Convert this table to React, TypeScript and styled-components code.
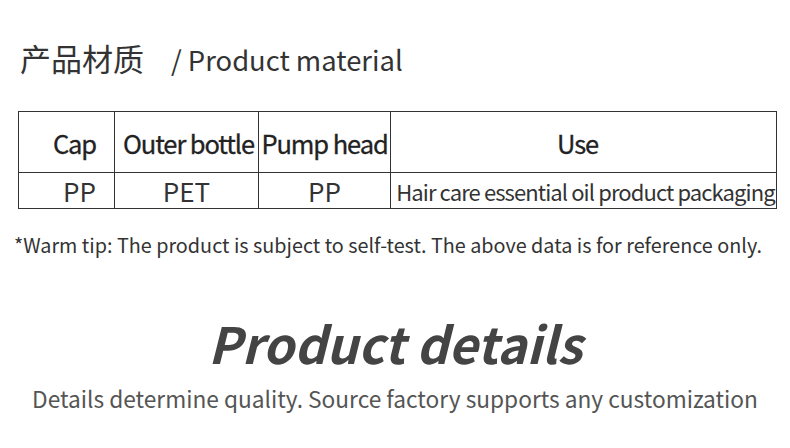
import React from "react";
import styled, { createGlobalStyle } from "styled-components";

const GlobalStyle = createGlobalStyle`
  html, body {
    margin: 0;
    padding: 0;
    background: #ffffff;
  }
  body {
    font-family: "Noto Sans CJK SC", "Noto Sans", sans-serif;
    color: #333333;
  }
`;

const Page = styled.div`
  width: 790px;
  height: 448px;
  overflow: hidden;
  display: flex;
  flex-direction: column;
`;

const Heading = styled.div`
  display: flex;
  align-items: baseline;
  gap: 27px;
  padding: 38px 0 0 20px;
  height: 71px;
  box-sizing: border-box;
`;

const HeadingCn = styled.span`
  font-size: 31px;
  line-height: 40px;
  color: #333;
`;

const HeadingEn = styled.span`
  font-size: 27.4px;
  line-height: 40px;
  color: #333;
`;

const Table = styled.table`
  margin: 40px 0 0 18px;
  width: 759px;
  border-collapse: collapse;
  table-layout: fixed;
`;

const Th = styled.th<{ $w?: number; $padL?: number; $padR?: number }>`
  width: ${(p) => (p.$w ? `${p.$w}px` : "auto")};
  height: 61px;
  padding: 0 ${(p) => p.$padR ?? 0}px 0 ${(p) => p.$padL ?? 0}px;
  border: 1px solid #333;
  font-size: 25.5px;
  font-weight: 400;
  -webkit-text-stroke: 0.3px #222;
  letter-spacing: -1.1px;
  color: #222;
  text-align: center;
  vertical-align: middle;
  white-space: nowrap;
  box-sizing: border-box;
`;

const Td = styled.td<{ $small?: boolean; $padL?: number }>`
  height: 36px;
  padding: 0 0 0 ${(p) => p.$padL ?? 0}px;
  border: 1px solid #333;
  font-size: ${(p) => (p.$small ? "22px" : "26px")};
  letter-spacing: ${(p) => (p.$small ? "-0.9px" : "0")};
  line-height: 34px;
  color: #333;
  text-align: center;
  white-space: nowrap;
  box-sizing: border-box;
`;

const Tip = styled.p`
  margin: 22px 0 0 14px;
  font-size: 19.8px;
  line-height: 28px;
  color: #333;
`;

const Details = styled.section`
  display: flex;
  flex-direction: column;
  align-items: center;
  margin-top: 53px;
`;

const DetailsTitle = styled.h2`
  margin: 0;
  font-size: 50px;
  line-height: 60px;
  font-weight: 700;
  font-style: italic;
  color: #444;
`;

const DetailsSub = styled.p`
  margin: 12px 0 0;
  font-size: 22.7px;
  line-height: 30px;
  color: #555;
`;

const App: React.FC = () => {
  return (
    <Page>
      <GlobalStyle />
      <Heading>
        <HeadingCn>产品材质</HeadingCn>
        <HeadingEn>/ Product material</HeadingEn>
      </Heading>
      <Table>
        <thead>
          <tr>
            <Th $w={96} $padL={16}>Cap</Th>
            <Th $w={144} $padL={4}>Outer bottle</Th>
            <Th $w={132}>Pump head</Th>
            <Th $padR={12}>Use</Th>
          </tr>
        </thead>
        <tbody>
          <tr>
            <Td $padL={26}>PP</Td>
            <Td>PET</Td>
            <Td>PP</Td>
            <Td $small $padL={4}>Hair care essential oil product packaging</Td>
          </tr>
        </tbody>
      </Table>
      <Tip>
        *Warm tip: The product is subject to self-test. The above data is for
        reference only.
      </Tip>
      <Details>
        <DetailsTitle>Product details</DetailsTitle>
        <DetailsSub>
          Details determine quality. Source factory supports any customization
        </DetailsSub>
      </Details>
    </Page>
  );
};

export default App;
